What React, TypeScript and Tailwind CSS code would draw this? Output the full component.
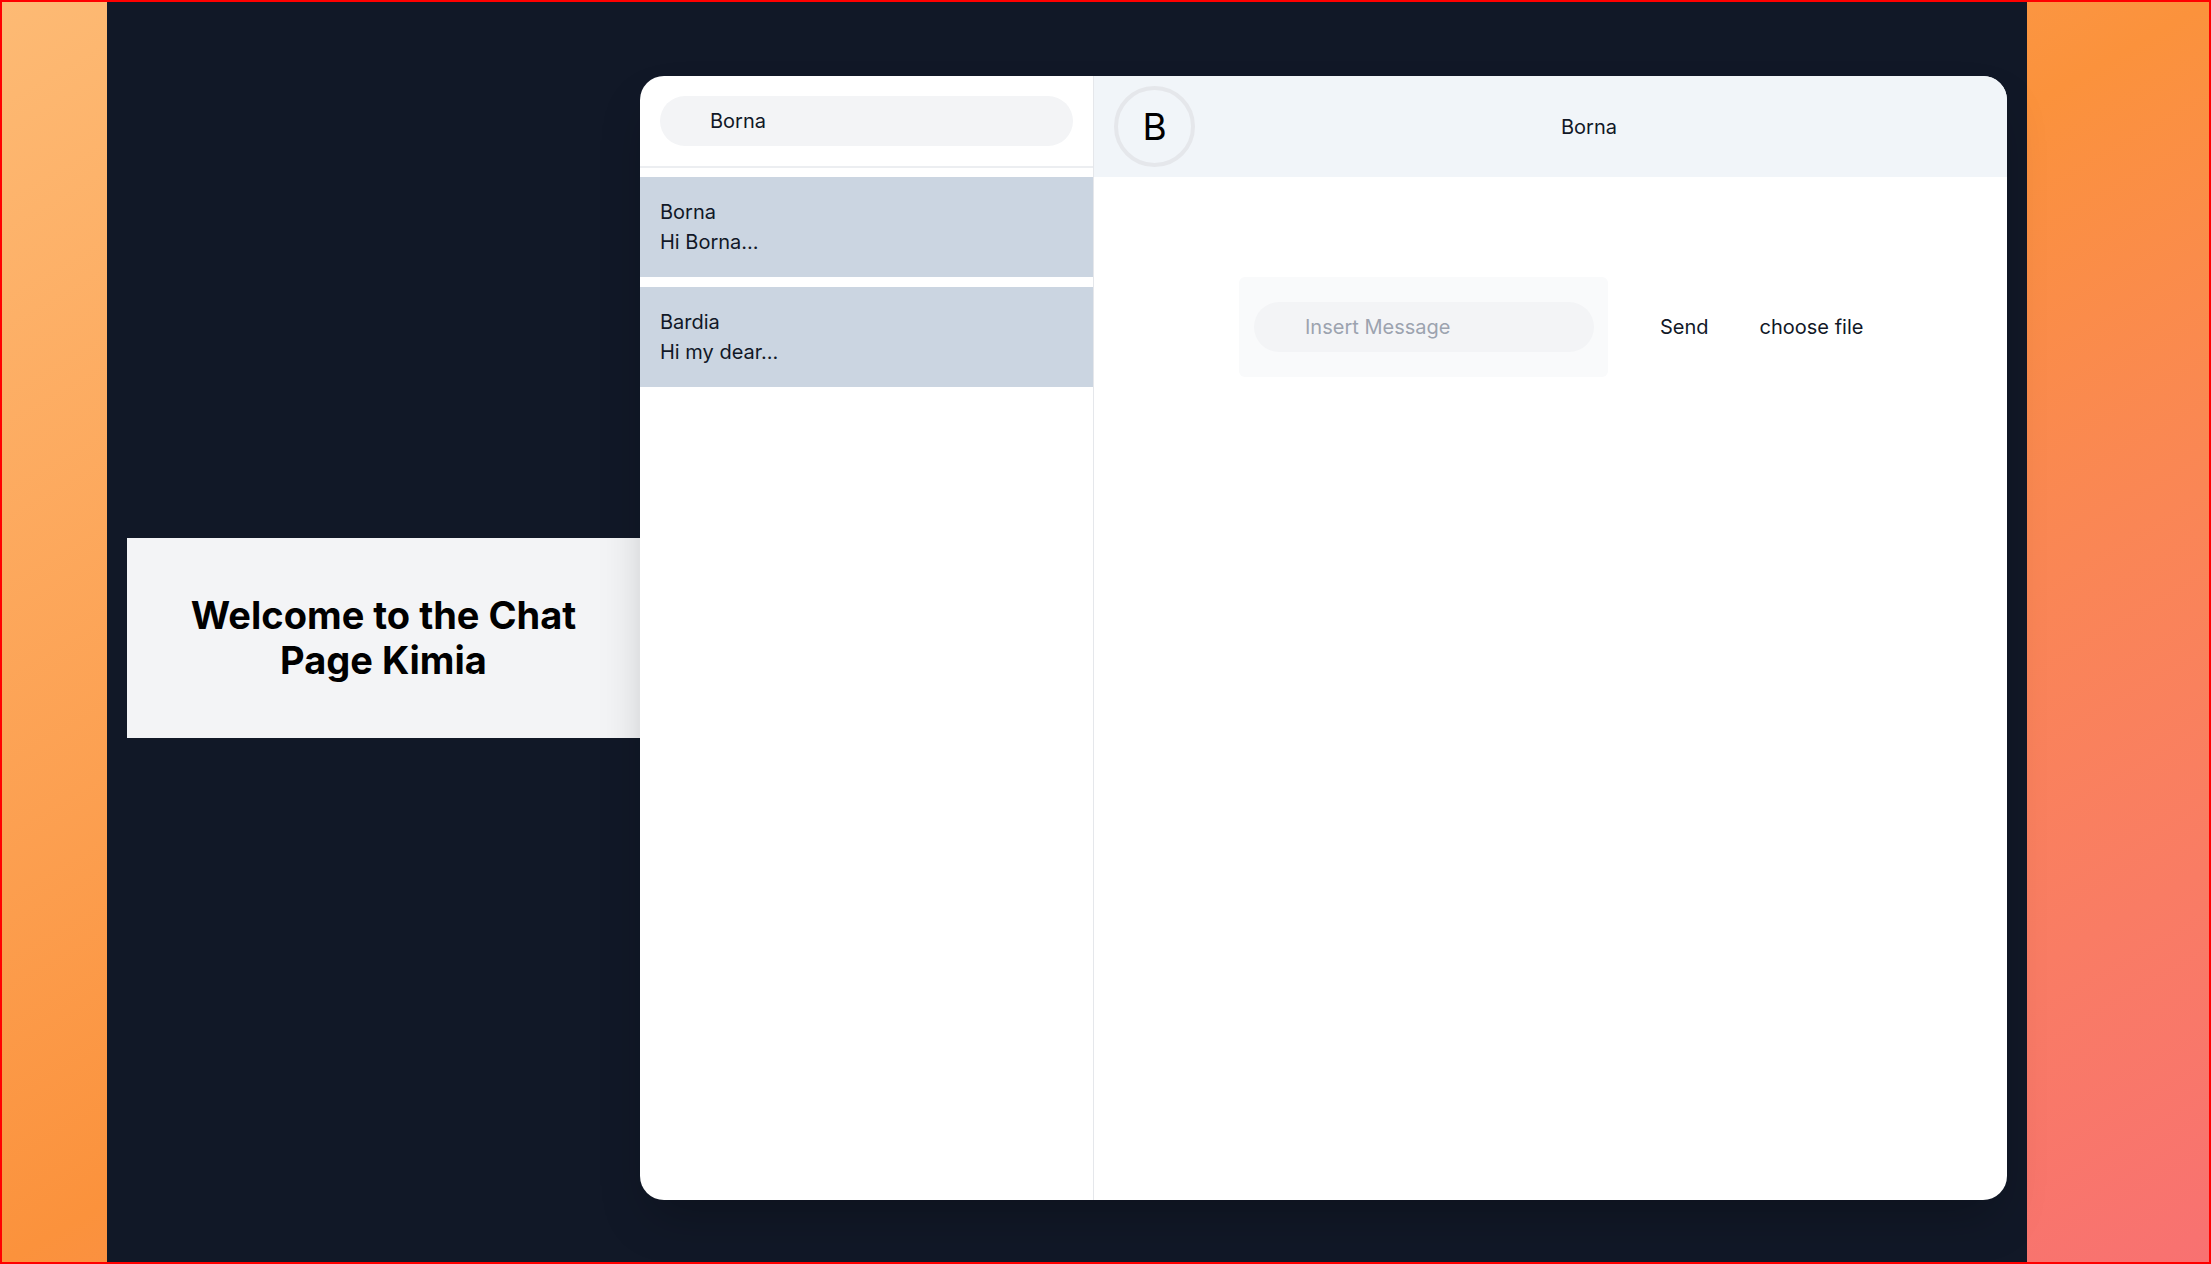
import React from "react";

export default function App() {
  const chats = [
    { name: "Borna", msg: "Hi Borna..." },
    { name: "Bardia", msg: "Hi my dear..." },
  ];
  return (
    <div
      className="h-screen w-full border-2 border-[#ff0000] bg-gradient-to-br from-[#fdba74] via-[#fb923c] to-[#f87171] overflow-hidden"
      style={{ fontFamily: "Inter, 'Noto Sans', sans-serif" }}
    >
      <div className="ml-[105px] flex h-full w-[1920px] items-center bg-[#111827] pl-[20px] pr-[20px] pt-[74px] pb-[62px]">
        <div className="flex h-[200px] w-[513px] shrink-0 items-center justify-center bg-[#f3f4f6]">
          <h1 className="text-center text-[38px] font-bold leading-[45px] text-black">
            Welcome to the Chat
            <br />
            Page Kimia
          </h1>
        </div>
        <div className="relative z-10 flex h-full flex-1 overflow-hidden rounded-3xl bg-white shadow-2xl">
          <div className="flex w-[454px] shrink-0 flex-col border-r border-[#e5e7eb]">
            <div className="border-b-2 border-[#eceef1] p-5">
              <div className="flex h-[50px] items-center rounded-full bg-[#f3f4f6] pl-[50px] text-xl text-[#111827]">
                Borna
              </div>
            </div>
            <div className="flex flex-col gap-[10px] pt-[9px]">
              {chats.map((c) => (
                <div key={c.name} className="bg-[#cbd5e1] px-5 py-5 text-xl leading-[30px] text-[#111827]">
                  <div>{c.name}</div>
                  <div>{c.msg}</div>
                </div>
              ))}
            </div>
          </div>
          <div className="flex min-w-0 flex-1 flex-col">
            <div className="flex h-[101px] shrink-0 items-center bg-[#f1f5f9] py-[10px] pl-[20px]">
              <div className="flex h-[81px] w-[81px] shrink-0 items-center justify-center rounded-full border-4 border-[#e5e7eb] text-[37px] text-black">
                B
              </div>
              <div className="flex-1 pr-[24px] text-center text-xl text-[#111827]">Borna</div>
            </div>
            <div className="pl-[145px] pt-[100px]">
              <div className="flex items-center">
                <div className="flex h-[100px] w-[369px] shrink-0 items-center rounded-md bg-[#f9fafb] pl-[15px] pr-[14px]">
                  <div className="flex h-[50px] w-full items-center rounded-full bg-[#f3f4f6] pl-[51px] text-xl text-[#9ca3af]">
                    Insert Message
                  </div>
                </div>
                <div className="ml-[52px] shrink-0 text-xl text-[#111827]">Send</div>
                <div className="ml-[51px] shrink-0 text-xl text-[#111827]">choose file</div>
              </div>
            </div>
          </div>
        </div>
      </div>
    </div>
  );
}
